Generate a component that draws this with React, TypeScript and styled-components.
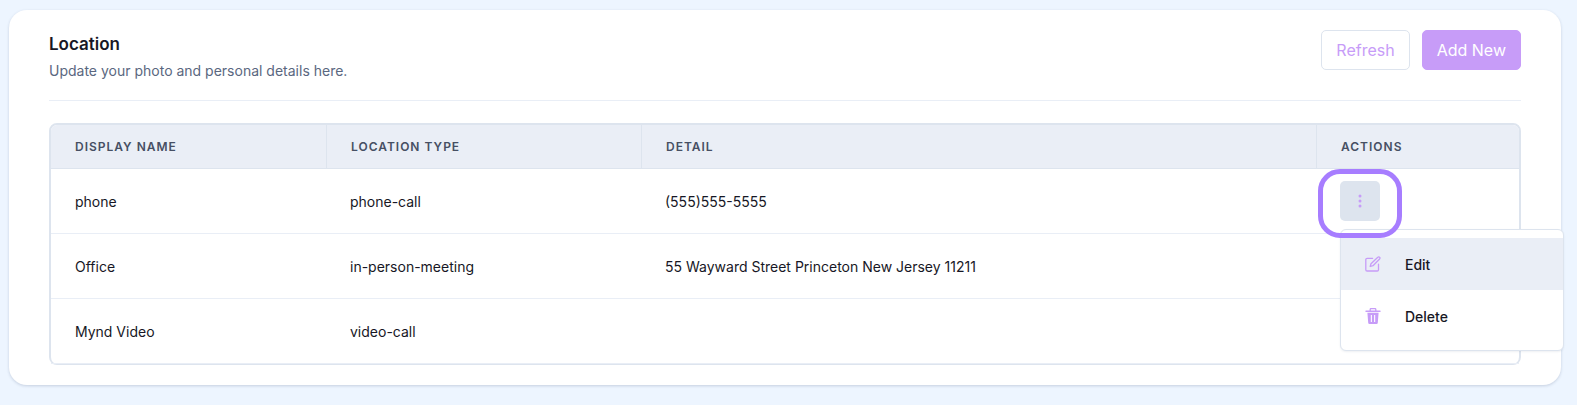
import React from "react";
import styled, { createGlobalStyle } from "styled-components";

const colors = {
  page: "#edf5ff",
  line: "#dde4ee",
  lineSoft: "#e9eef6",
  head: "#eaeef6",
  accent: "#c79cf8",
  ring: "#a77dff",
  ink: "#171725",
  muted: "#5a6780",
  label: "#464f63",
};

const GlobalStyle = createGlobalStyle`
  *, *::before, *::after { box-sizing: border-box; }
  body {
    margin: 0;
    background: ${colors.page};
    color: ${colors.ink};
    font-family: Inter, "Liberation Sans", sans-serif;
    font-size: 14px;
    line-height: 20px;
  }
  button { font-family: inherit; cursor: pointer; }
`;

const Page = styled.main`
  padding: 10px 16px 20px 9px;
`;

const Card = styled.section`
  padding: 20px 40px;
  background: #fff;
  border-radius: 18px;
  box-shadow: 0 1px 3px rgba(40, 60, 100, 0.2);
`;

const Header = styled.header`
  display: flex;
  justify-content: space-between;
  align-items: flex-start;
  padding-bottom: 19px;
  margin-bottom: 22px;
  border-bottom: 1px solid ${colors.lineSoft};
`;

const Heading = styled.div`
  display: flex;
  flex-direction: column;
  gap: 3px;
`;

const Title = styled.h1`
  margin: 0;
  font-size: 17px;
  font-weight: 600;
  line-height: 28px;
`;

const Subtitle = styled.p`
  margin: 0;
  color: ${colors.muted};
`;

const ButtonGroup = styled.div`
  display: flex;
  gap: 12px;
`;

const Button = styled.button<{ $solid?: boolean }>`
  height: 40px;
  padding: 0 14px;
  font-size: 16px;
  border: 1px solid ${(p) => (p.$solid ? colors.accent : colors.line)};
  border-radius: 5px;
  background: ${(p) => (p.$solid ? colors.accent : "#fff")};
  color: ${(p) => (p.$solid ? "#fff" : colors.accent)};
`;

const TableFrame = styled.div`
  border: 2px solid ${colors.line};
  border-bottom-width: 1px;
  border-radius: 8px;
`;

const Table = styled.table`
  width: 100%;
  table-layout: fixed;
  border-collapse: separate;
  border-spacing: 0;
  text-align: left;
`;

const HeadCell = styled.th<{ $width?: number }>`
  width: ${(p) => (p.$width ? `${p.$width}px` : "auto")};
  height: 44px;
  padding: 0 24px;
  background: ${colors.head};
  border-bottom: 1px solid ${colors.line};
  color: ${colors.label};
  font-size: 12px;
  font-weight: 600;
  letter-spacing: 1px;
  text-transform: uppercase;

  &:not(:last-child) { border-right: 1px solid ${colors.line}; }
  &:first-child { border-top-left-radius: 6px; }
  &:last-child { border-top-right-radius: 6px; }
`;

const Cell = styled.td`
  height: 65px;
  padding: 2px 23px 0;
  border-bottom: 1px solid ${colors.lineSoft};

  &:first-child { padding-left: 24px; }
  &:last-child { padding-top: 0; }
`;

const Actions = styled.div`
  position: relative;
  width: 40px;
  height: 40px;
`;

const MoreButton = styled.button`
  display: grid;
  place-items: center;
  width: 40px;
  height: 40px;
  padding: 0;
  border: 0;
  border-radius: 5px;
  background: ${colors.line};
  color: ${colors.accent};
`;

const FocusRing = styled.span`
  position: absolute;
  z-index: 2;
  inset: -12px -22px -17px -22px;
  border: 5px solid ${colors.ring};
  border-radius: 22px;
  pointer-events: none;
`;

const Menu = styled.div`
  position: absolute;
  z-index: 1;
  top: 48px;
  left: 0;
  width: 224px;
  padding: 8px 0;
  background: #fff;
  border: 1px solid ${colors.line};
  border-radius: 6px;
  box-shadow: 0 1px 2px rgba(40, 60, 100, 0.08);
`;

const MenuItem = styled.button<{ $active?: boolean }>`
  display: flex;
  align-items: center;
  gap: 24px;
  width: 100%;
  height: 52px;
  padding: 0 24px;
  border: 0;
  background: ${(p) => (p.$active ? colors.head : "transparent")};
  color: ${colors.ink};
  font-size: 14px;
  font-weight: 500;

  svg { color: ${colors.accent}; }
`;

const DotsIcon = () => (
  <svg width="16" height="16" viewBox="0 0 16 16" fill="currentColor" aria-hidden="true">
    <circle cx="8" cy="3" r="1.5" />
    <circle cx="8" cy="8" r="1.5" />
    <circle cx="8" cy="13" r="1.5" />
  </svg>
);

const EditIcon = () => (
  <svg width="16" height="16" viewBox="0 0 16 16" fill="none" stroke="currentColor" strokeWidth="1.3" strokeLinecap="round" strokeLinejoin="round" aria-hidden="true">
    <path d="M7.6 2.3H2.1a1.3 1.3 0 0 0-1.3 1.3v10.1A1.3 1.3 0 0 0 2.1 15h10.1a1.3 1.3 0 0 0 1.3-1.3V8.2" />
    <path d="M12.8 1.2a1.2 1.2 0 0 1 1.8 0 1.2 1.2 0 0 1 0 1.8L8 9.7l-2.8.8L6 7.8z" />
  </svg>
);

const TrashIcon = () => (
  <svg width="16" height="16" viewBox="0 0 16 16" aria-hidden="true">
    <path d="M5.2 3V1.4a.8.8 0 0 1 .8-.8h4a.8.8 0 0 1 .8.8V3" fill="none" stroke="currentColor" strokeWidth="1.3" />
    <path d="M1 3.2h14" stroke="currentColor" strokeWidth="1.4" strokeLinecap="round" />
    <path fillRule="evenodd" fill="currentColor" d="M2.4 4.8h11.2l-.8 10a1.3 1.3 0 0 1-1.3 1.2h-7a1.3 1.3 0 0 1-1.3-1.2zM5.8 7v7h1.1V7zM9.1 7v7h1.1V7z" />
  </svg>
);

const columns = [
  { label: "Display Name", width: 276 },
  { label: "Location Type", width: 315 },
  { label: "Detail" },
  { label: "Actions", width: 202 },
];

const locations = [
  { name: "phone", type: "phone-call", detail: "(555)555-5555", open: true },
  { name: "Office", type: "in-person-meeting", detail: "55 Wayward Street Princeton New Jersey 11211" },
  { name: "Mynd Video", type: "video-call", detail: "" },
];

const ActionMenu = () => (
  <Actions>
    <MoreButton type="button" aria-label="Actions" aria-haspopup="menu" aria-expanded="true">
      <DotsIcon />
    </MoreButton>
    <Menu role="menu">
      <MenuItem type="button" role="menuitem" $active>
        <EditIcon />
        Edit
      </MenuItem>
      <MenuItem type="button" role="menuitem">
        <TrashIcon />
        Delete
      </MenuItem>
    </Menu>
    <FocusRing />
  </Actions>
);

export default function App() {
  return (
    <Page>
      <GlobalStyle />
      <Card>
        <Header>
          <Heading>
            <Title>Location</Title>
            <Subtitle>Update your photo and personal details here.</Subtitle>
          </Heading>
          <ButtonGroup>
            <Button type="button">Refresh</Button>
            <Button type="button" $solid>Add New</Button>
          </ButtonGroup>
        </Header>
        <TableFrame>
          <Table>
            <thead>
              <tr>
                {columns.map((column) => (
                  <HeadCell key={column.label} scope="col" $width={column.width}>
                    {column.label}
                  </HeadCell>
                ))}
              </tr>
            </thead>
            <tbody>
              {locations.map((location) => (
                <tr key={location.name}>
                  <Cell>{location.name}</Cell>
                  <Cell>{location.type}</Cell>
                  <Cell>{location.detail}</Cell>
                  <Cell>{location.open && <ActionMenu />}</Cell>
                </tr>
              ))}
            </tbody>
          </Table>
        </TableFrame>
      </Card>
    </Page>
  );
}
